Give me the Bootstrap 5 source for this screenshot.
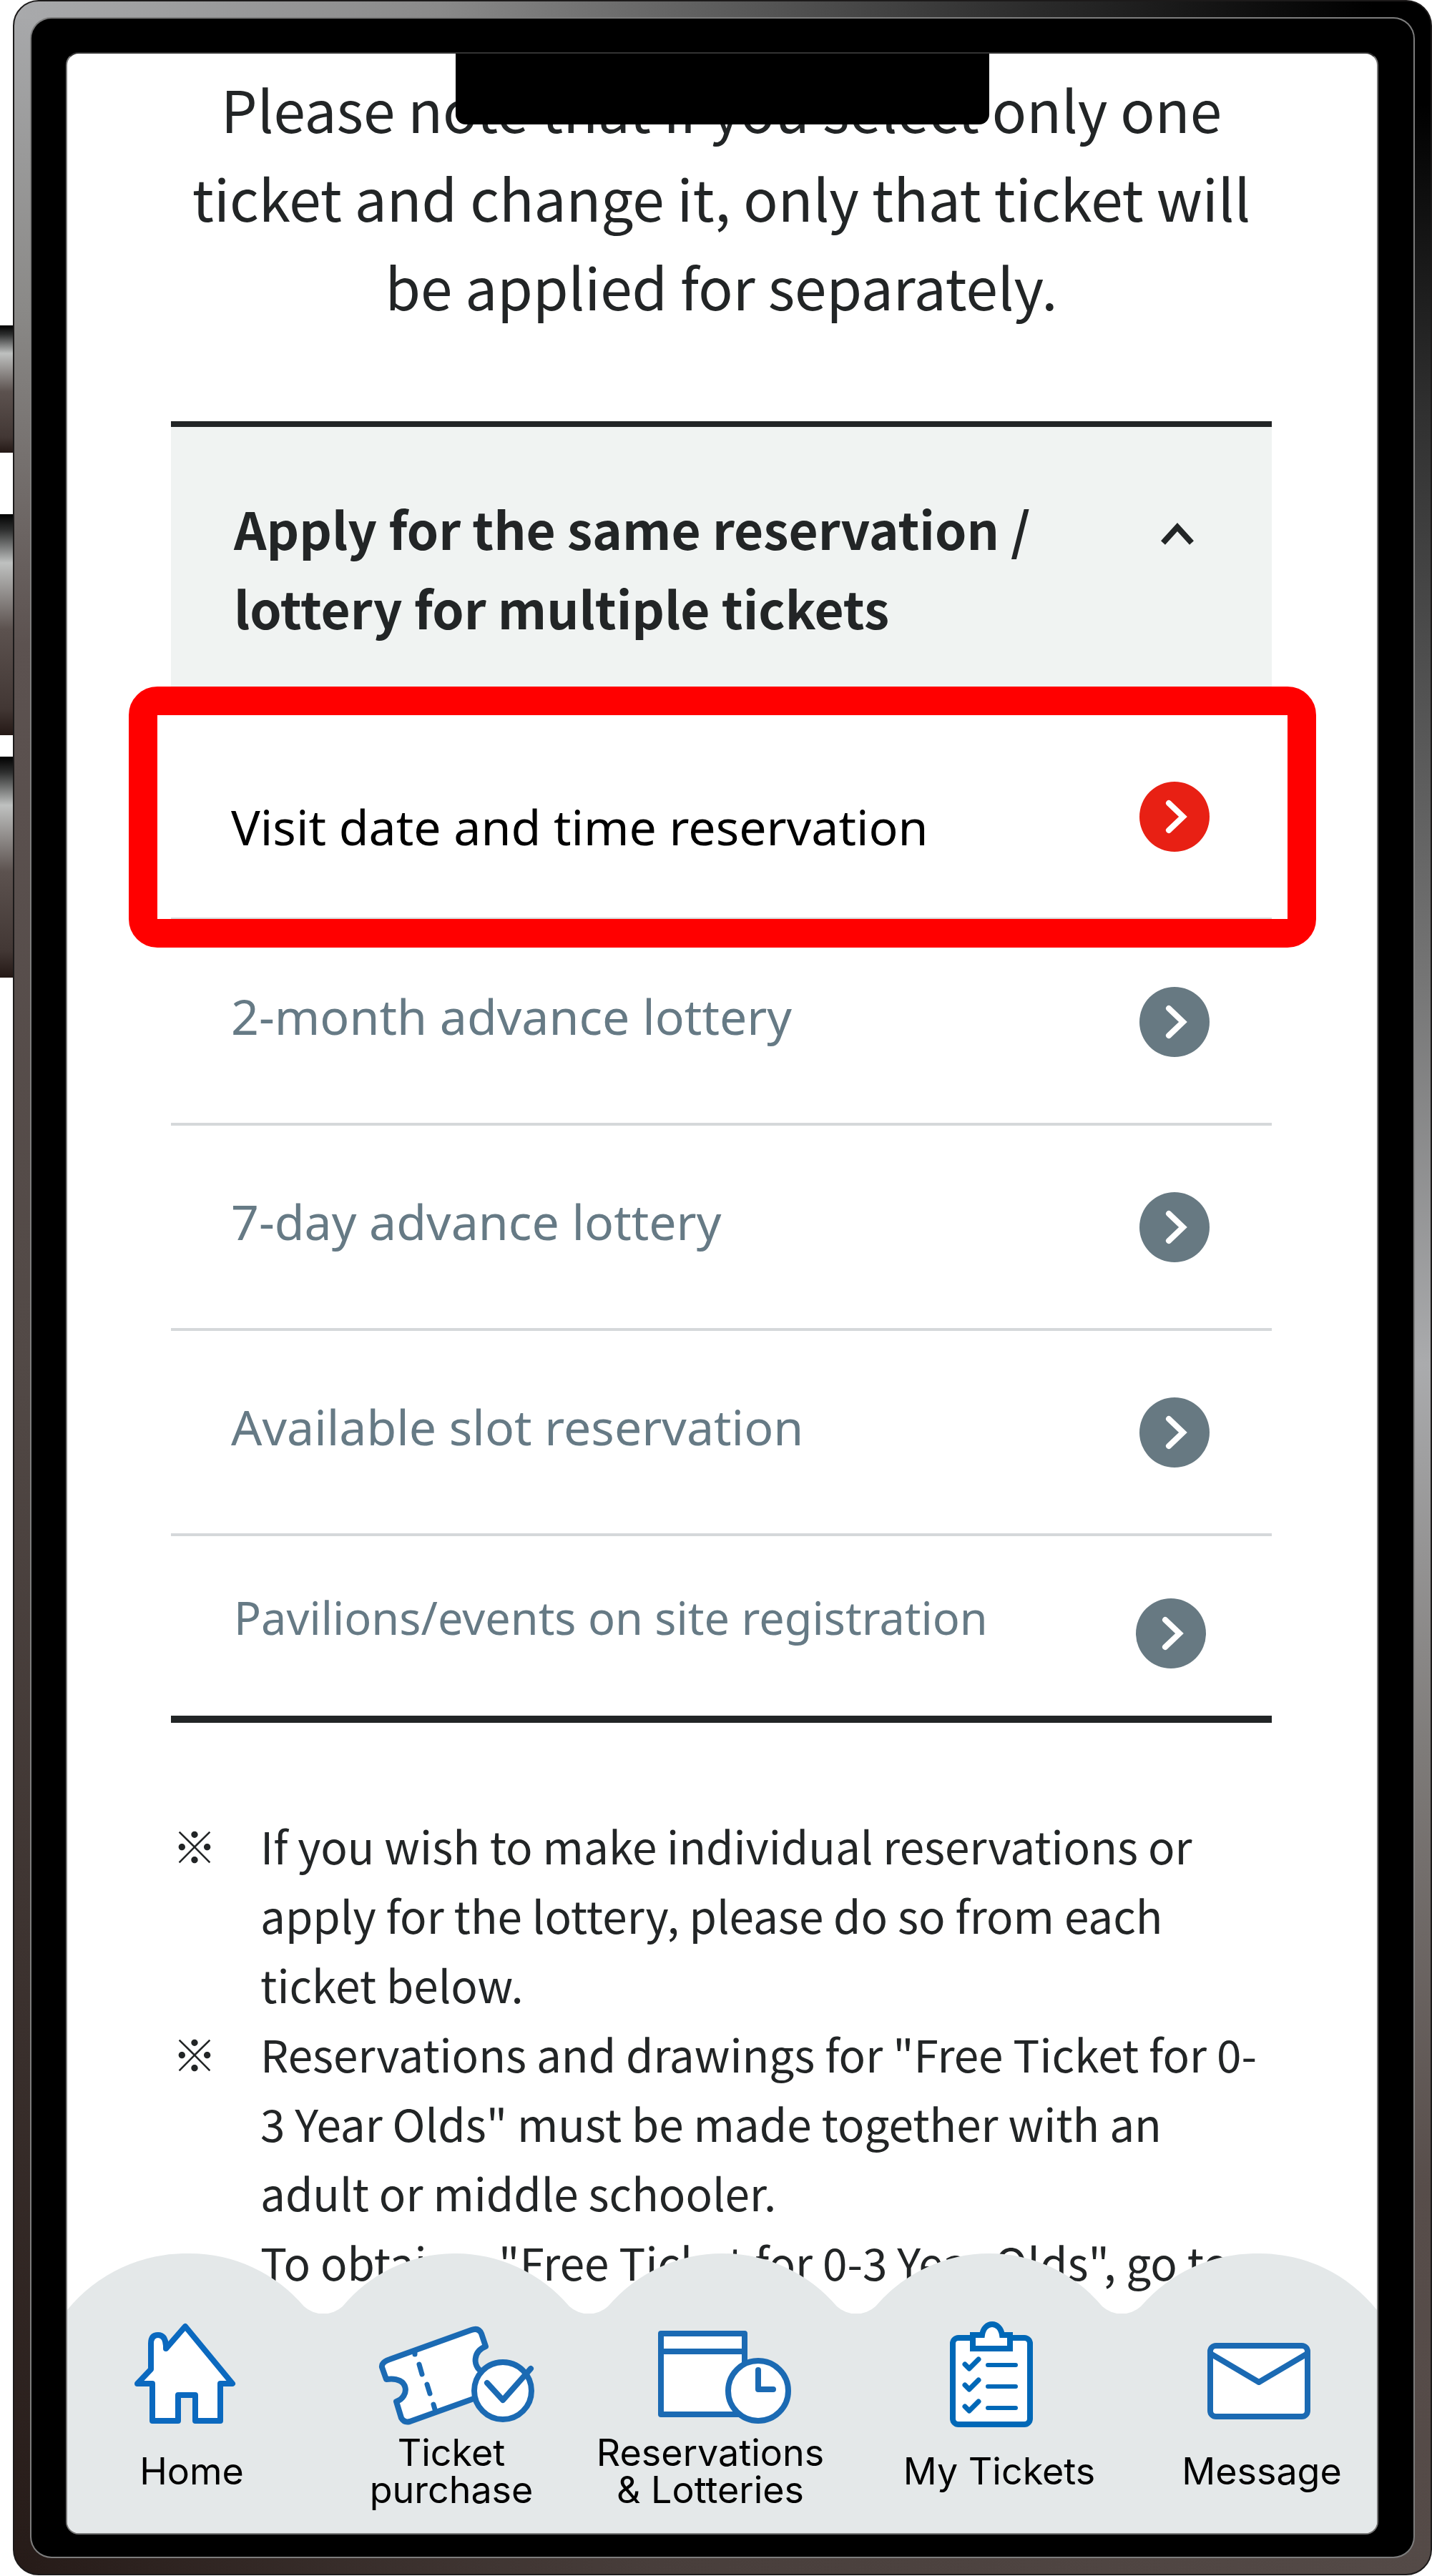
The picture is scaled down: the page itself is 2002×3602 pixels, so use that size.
<!DOCTYPE html>
<html lang="en">
<head>
<meta charset="utf-8">
<meta name="viewport" content="width=device-width, initial-scale=1">
<title>Ticket reservations</title>
<link rel="stylesheet" href="https://cdn.jsdelivr.net/npm/bootstrap@5.3.0/dist/css/bootstrap.min.css">
<style>
  body { background: #fff; color: #222526; font-family: "Noto Sans CJK JP", "Noto Sans", sans-serif; }

  /* phone hardware */
  .side-rail { flex: 0 0 18px; padding-top: 455px; }
  .side-key { height: 309px; background: linear-gradient(#000, #2d2e2e 7%, #bfc1c0 22%, #5c524f 52%, #423734 88%, #241815); }
  .side-key + .side-key { margin-top: 30px; }
  .side-key.key-short { height: 178px; margin-bottom: 86px; }
  .side-key.key-short + .side-key { margin-top: 0; }
  .phone-ring {
    padding: 24px; border: 2px solid #1c1a1a; border-radius: 36px; min-width: 0;
    background:
      linear-gradient(90deg, #a9aaac, #8a8a8a 30%, #5c5c5c 50%, #2b2b2b 72%, #000 96%) top / 100% 24px no-repeat,
      linear-gradient(90deg, #261b18, #483e3b 45%, #544a47) bottom / 100% 24px no-repeat,
      linear-gradient(#a9aaac, #8a8987 12%, #5c5250 25%, #524946 53%, #261b18) left / 50% 100% no-repeat,
      linear-gradient(#000 4%, #303030 16%, #757575 38%, #aaabad 53%, #7e7b79 68%, #574d4a 85%, #544a47) right / 50% 100% no-repeat;
  }
  .phone-bezel { background: #000; border-radius: 28px; padding: 47px 49px 31px 48px; box-shadow: 0 0 0 2px #7d7d7d; }
  .phone-screen { border: 2px solid #777; border-top-color: #333; border-radius: 18px; overflow: hidden; background: #fff; }
  .notch { top: -2px; left: 50%; width: 746px; height: 101px; margin-left: -373px; background: #000; border-radius: 0 0 14px 14px; }

  .screen-body { padding: 14px 147px 0 145px; }
  .intro { font-size: 80px; line-height: 124px; margin-bottom: 128px; }

  /* accordion */
  .acc-panel { border-top: 8px solid #222526; border-bottom: 10px solid #222526; }
  .acc-head { background: #f0f3f2; border: 0; color: inherit; font-size: 71px; font-weight: 700; line-height: 111px; padding: 86px 106px 95px 88px; }
  .acc-head svg { width: 52px; height: 34px; margin-top: 46px; }
  .acc-link { position: relative; min-height: 287px; padding: 0 87px 0 84px; font-family: "Noto Sans", sans-serif; font-size: 68px; line-height: 98px; color: #667a85; border-bottom: 4px solid #d5d8da; }
  .acc-link span { padding-bottom: 16px; }
  .acc-link svg { width: 98px; height: 98px; flex: none; fill: #677982; }
  .acc-link.is-active { color: #000; }
  .acc-link.is-active span { padding: 28px 0 0; }
  .acc-link.is-active svg { fill: #e82014; }
  .acc-link.is-active::after { content: ""; position: absolute; z-index: 1; inset: -40px -62px -42px -59px; border: 40px solid #f00; border-radius: 40px; }
  .acc-link.is-last { min-height: 251px; padding: 20px 92px 0 88px; font-size: 63px; border-bottom: 0; }
  .acc-link.is-last span { padding-bottom: 44px; }

  .notes { margin-top: 123px; font-size: 62px; line-height: 97px; }
  .notes li { gap: 61px; padding-left: 2px; }

  /* tab bar */
  .tab-bar { margin-top: -60px; position: relative; }
  .tab-wave { display: block; width: 100%; height: 85px; fill: #e4e8e9; }
  .tab-row { display: grid; grid-template-columns: 348fr 378fr 346fr 462fr 297fr; background: #e4e8e9; padding: 5px 0 30px; margin-top: -1px; }
  .tab-row a { color: #000; font-family: Inter, sans-serif; font-size: 52px; line-height: 52px; min-width: 0; white-space: nowrap; }
  .tab-row a:last-child { padding-right: 25px; }
  .tab-row svg { width: 240px; height: 160px; fill: #fff; stroke: #1b6ab3; stroke-width: 8; stroke-linejoin: round; stroke-linecap: round; overflow: visible; }
  .tab-row span { height: 112px; }
</style>
<script src="https://cdn.jsdelivr.net/npm/bootstrap@5.3.0/dist/js/bootstrap.bundle.min.js"></script>
</head>
<body>
<div class="d-flex">
  <div class="side-rail" aria-hidden="true">
    <div class="side-key key-short"></div>
    <div class="side-key"></div>
    <div class="side-key"></div>
  </div>
  <div class="phone-ring flex-grow-1">
    <div class="phone-bezel">
      <div class="phone-screen position-relative">
        <div class="notch position-absolute"></div>

        <main class="screen-body">
          <p class="intro text-center">Please note that if you select only one<br>ticket and change it, only that ticket will<br>be applied for separately.</p>

          <section class="acc-panel">
            <button class="acc-head w-100 d-flex justify-content-between align-items-start text-start" type="button" data-bs-toggle="collapse" data-bs-target="#multi" aria-expanded="true" aria-controls="multi">
              <span>Apply for the same reservation /<br>lottery for multiple tickets</span>
              <svg viewBox="0 0 52 34" fill="none" stroke="#222526" stroke-width="8" aria-hidden="true"><path d="M6 30 26 8 46 30"/></svg>
            </button>
            <div class="collapse show" id="multi">
              <a class="acc-link is-active d-flex justify-content-between align-items-center text-decoration-none" href="#"><span>Visit date and time reservation</span>
                <svg viewBox="0 0 98 98" aria-hidden="true"><circle cx="49" cy="49" r="49"/><path d="M41 30 61 49 41 68" fill="none" stroke="#fff" stroke-width="8" stroke-linecap="round"/></svg></a>
              <a class="acc-link d-flex justify-content-between align-items-center text-decoration-none" href="#"><span>2-month advance lottery</span>
                <svg viewBox="0 0 98 98" aria-hidden="true"><circle cx="49" cy="49" r="49"/><path d="M41 30 61 49 41 68" fill="none" stroke="#fff" stroke-width="8" stroke-linecap="round"/></svg></a>
              <a class="acc-link d-flex justify-content-between align-items-center text-decoration-none" href="#"><span>7-day advance lottery</span>
                <svg viewBox="0 0 98 98" aria-hidden="true"><circle cx="49" cy="49" r="49"/><path d="M41 30 61 49 41 68" fill="none" stroke="#fff" stroke-width="8" stroke-linecap="round"/></svg></a>
              <a class="acc-link d-flex justify-content-between align-items-center text-decoration-none" href="#"><span>Available slot reservation</span>
                <svg viewBox="0 0 98 98" aria-hidden="true"><circle cx="49" cy="49" r="49"/><path d="M41 30 61 49 41 68" fill="none" stroke="#fff" stroke-width="8" stroke-linecap="round"/></svg></a>
              <a class="acc-link is-last d-flex justify-content-between align-items-center text-decoration-none" href="#"><span>Pavilions/events on site registration</span>
                <svg viewBox="0 0 98 98" aria-hidden="true"><circle cx="49" cy="49" r="49"/><path d="M41 30 61 49 41 68" fill="none" stroke="#fff" stroke-width="8" stroke-linecap="round"/></svg></a>
            </div>
          </section>

          <ul class="notes list-unstyled mb-0">
            <li class="d-flex"><span>※</span><span>If you wish to make individual reservations or<br>apply for the lottery, please do so from each<br>ticket below.</span></li>
            <li class="d-flex"><span>※</span><span>Reservations and drawings for "Free Ticket for 0-<br>3 Year Olds" must be made together with an<br>adult or middle schooler.<br>To obtain a "Free Ticket for 0-3 Year Olds", go to</span></li>
          </ul>
        </main>

        <nav class="tab-bar" aria-label="Main">
          <svg class="tab-wave" viewBox="0 0 1831 85" preserveAspectRatio="none" aria-hidden="true">
            <path d="M0 79A214 214 0 0 1 171 0A210 210 0 0 1 331 74A40 40 0 0 0 385 74A205 205 0 0 1 540 0A210 210 0 0 1 702 74A40 40 0 0 0 756 74A210 210 0 0 1 916 0A210 210 0 0 1 1076 74A40 40 0 0 0 1130 74A210 210 0 0 1 1289 0A206 206 0 0 1 1447 74A40 40 0 0 0 1501 74A212 212 0 0 1 1666 0A210 210 0 0 1 1831 79V85H0Z"/>
          </svg>
          <div class="tab-row">
            <a class="d-flex flex-column align-items-center text-center text-decoration-none" href="#">
              <svg viewBox="0 0 240 160" aria-hidden="true"><g stroke="#0b69bf"><path d="M111 13 177 93H160V145H125V109H101V145H65V93H44L63 73V37Q63 25 73 25Q83 25 84 40V44Z"/></g></svg>
              <span class="d-flex align-items-center">Home</span>
            </a>
            <a class="d-flex flex-column align-items-center text-center text-decoration-none" href="#">
              <svg viewBox="0 0 240 160" aria-hidden="true">
                <path d="M34 59 148 18Q158 14 162 23L168 41C150 48 150 68 162 76L168 108 62 146Q54 148 50 141L43 118C62 112 62 82 29 87L23 70Q22 63 34 59Z"/>
                <path d="M69 48V52M75 66 79 80M86 94 90 107M95 122 97 129" stroke-width="7"/>
                <circle cx="192" cy="103" r="40"/><path d="M170 92 192 116 231 72" fill="none"/>
              </svg>
              <span class="d-flex align-items-center">Ticket<br>purchase</span>
            </a>
            <a class="d-flex flex-column align-items-center text-center text-decoration-none" href="#">
              <svg viewBox="0 0 240 160" aria-hidden="true">
                <path d="M51 23H168V136H51ZM51 48H168"/>
                <circle cx="187" cy="103" r="42"/><path d="M187 74V101H208" fill="none"/>
              </svg>
              <span class="d-flex align-items-center">Reservations<br>&amp; Lotteries</span>
            </a>
            <a class="d-flex flex-column align-items-center text-center text-decoration-none" href="#">
              <svg viewBox="0 0 240 160" aria-hidden="true"><g stroke="#0068b7">
                <rect x="55" y="29" width="108" height="121" rx="8"/>
                <path d="M83 25H96C99 5 121 5 124 25H135V44H83Z" stroke-linejoin="miter"/>
                <path d="M72 66 78 72 91 59M72 95 78 101 91 88M72 125 78 131 91 118" stroke-width="7"/>
                <path d="M104 67H143M104 97H143M104 127H143" stroke-width="6"/></g>
              </svg>
              <span class="d-flex align-items-center">My Tickets</span>
            </a>
            <a class="d-flex flex-column align-items-center text-center text-decoration-none" href="#">
              <svg viewBox="0 0 240 160" aria-hidden="true"><rect x="48" y="40" width="136" height="99" rx="8"/><path d="M50 52 116 91 182 52"/></svg>
              <span class="d-flex align-items-center">Message</span>
            </a>
          </div>
        </nav>
      </div>
    </div>
  </div>
</div>
</body>
</html>
